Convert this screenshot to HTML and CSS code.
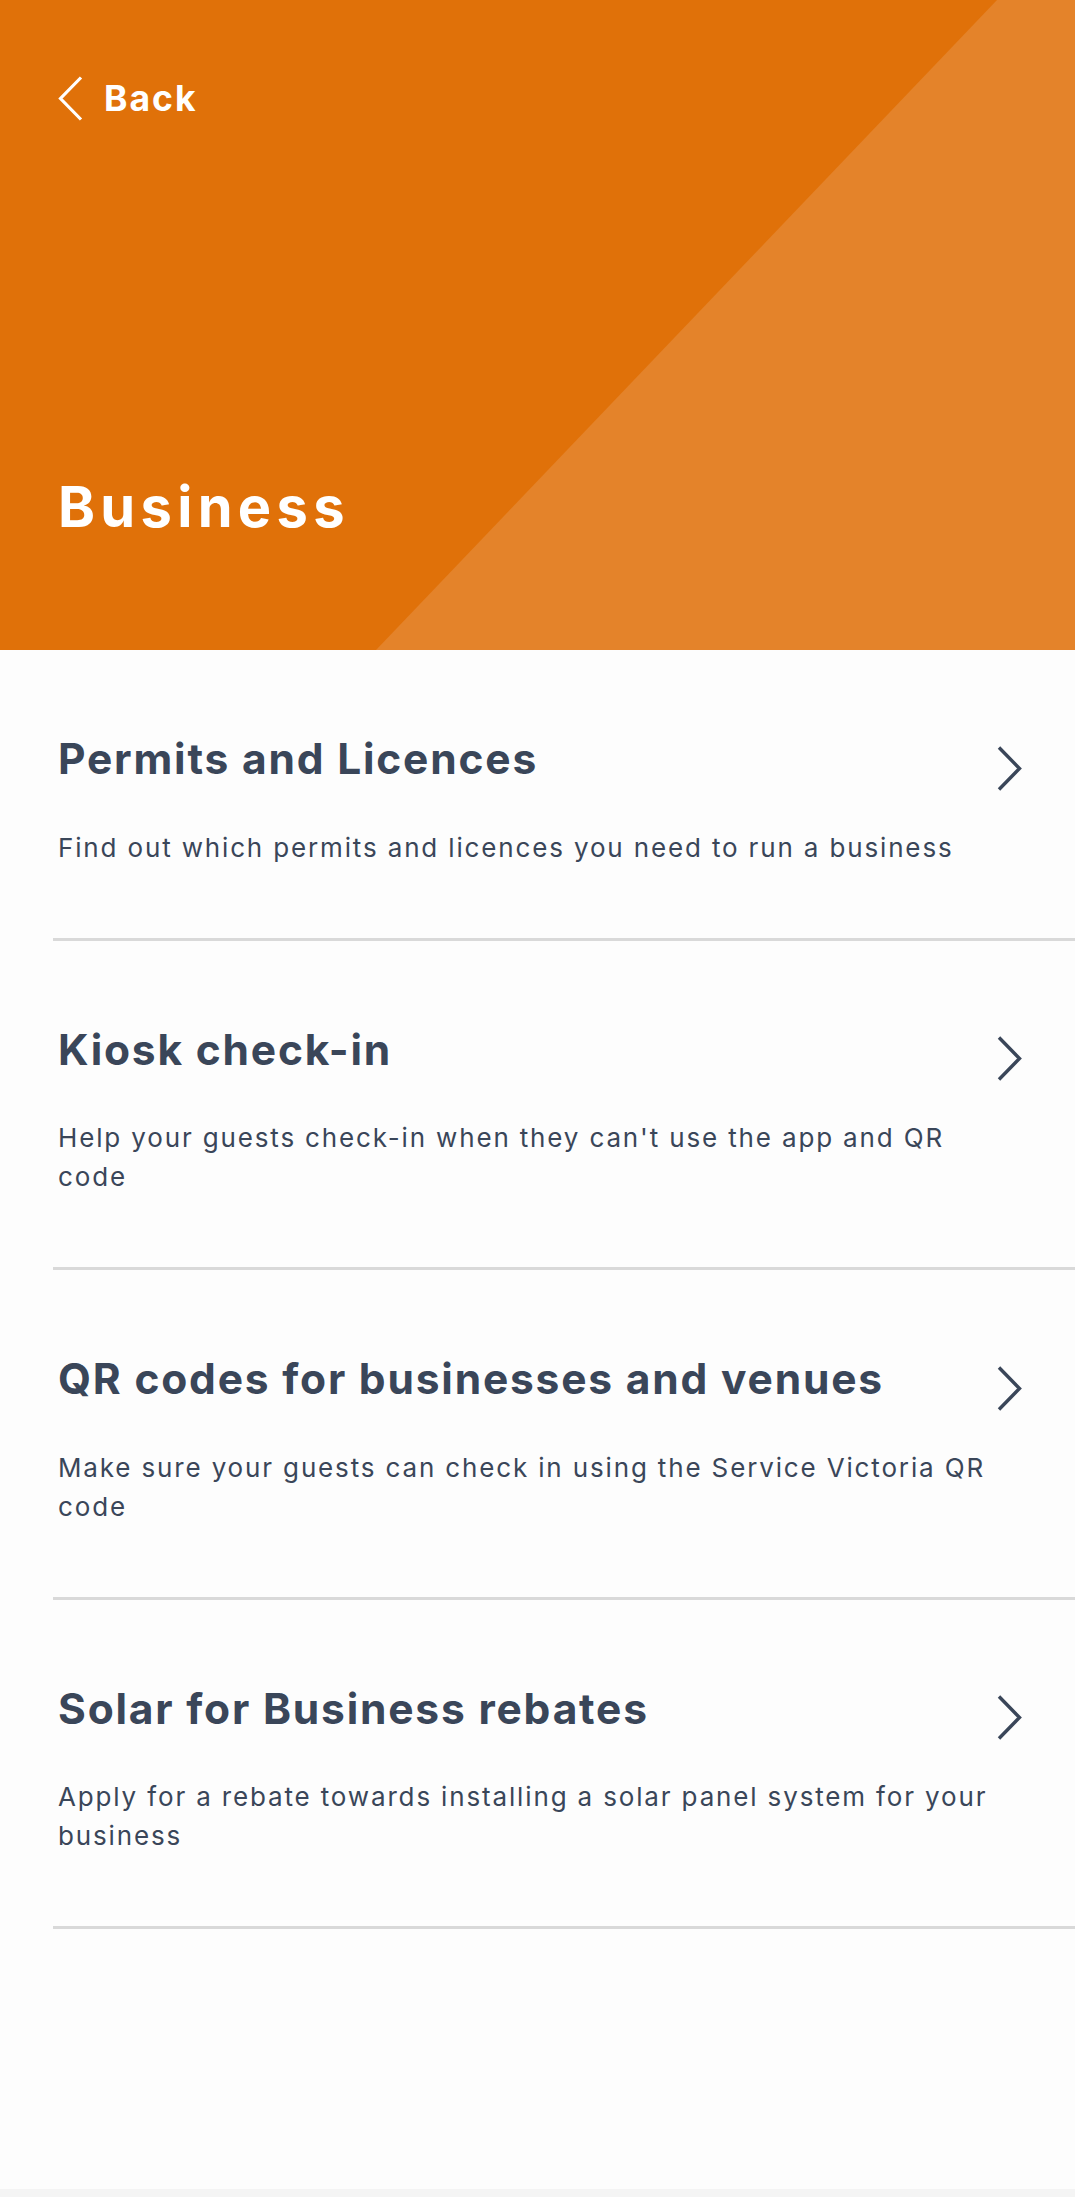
FILE: index.html
```html
<!DOCTYPE html>
<html lang="en">
<head>
<meta charset="utf-8">
<title>Business</title>
<link rel="stylesheet" href="styles.css">
</head>
<body>
<div class="page">
  <header class="hero">
    <a class="back" href="#">
      <svg class="back-icon" width="25" height="45" viewBox="0 0 25 45" aria-hidden="true"><polyline points="23,1.5 2.5,22.5 23,43.5" fill="none" stroke="#ffffff" stroke-width="3.2"/></svg>
      <span class="back-label">Back</span>
    </a>
    <h1 class="hero-title">Business</h1>
  </header>

  <ul class="list">
    <li class="item">
      <div class="item-head">
        <h2 class="item-title">Permits and Licences</h2>
        <svg class="chev" width="25" height="45" viewBox="0 0 25 45" aria-hidden="true"><polyline points="2,1.5 22.5,22.5 2,43.5" fill="none" stroke="#3a4659" stroke-width="3.4"/></svg>
      </div>
      <p class="item-desc">Find out which permits and licences you need to run a business</p>
    </li>
    <li class="item">
      <div class="item-head">
        <h2 class="item-title">Kiosk check-in</h2>
        <svg class="chev" width="25" height="45" viewBox="0 0 25 45" aria-hidden="true"><polyline points="2,1.5 22.5,22.5 2,43.5" fill="none" stroke="#3a4659" stroke-width="3.4"/></svg>
      </div>
      <p class="item-desc">Help your guests check-in when they can't use the app and QR code</p>
    </li>
    <li class="item">
      <div class="item-head">
        <h2 class="item-title">QR codes for businesses and venues</h2>
        <svg class="chev" width="25" height="45" viewBox="0 0 25 45" aria-hidden="true"><polyline points="2,1.5 22.5,22.5 2,43.5" fill="none" stroke="#3a4659" stroke-width="3.4"/></svg>
      </div>
      <p class="item-desc">Make sure your guests can check in using the Service Victoria QR code</p>
    </li>
    <li class="item">
      <div class="item-head">
        <h2 class="item-title">Solar for Business rebates</h2>
        <svg class="chev" width="25" height="45" viewBox="0 0 25 45" aria-hidden="true"><polyline points="2,1.5 22.5,22.5 2,43.5" fill="none" stroke="#3a4659" stroke-width="3.4"/></svg>
      </div>
      <p class="item-desc">Apply for a rebate towards installing a solar panel system for your business</p>
    </li>
  </ul>

  <div class="spacer"></div>
  <div class="bottom-bar"></div>
</div>
</body>
</html>
```
FILE: styles.css
```css
* { box-sizing: border-box; }

html, body {
  margin: 0;
  padding: 0;
}

body {
  background: #fdfdfd;
  font-family: Inter, "Noto Sans", "Liberation Sans", sans-serif;
  color: #3a4659;
}

.page {
  min-height: 2197px;
  display: flex;
  flex-direction: column;
}

.hero {
  position: relative;
  height: 650px;
  background: #e07109;
  padding: 76px 58px 0 58px;
  display: flex;
  flex-direction: column;
  overflow: hidden;
}

.hero::before {
  content: "";
  position: absolute;
  inset: 0;
  background: #e4832a;
  clip-path: polygon(997px 0, 100% 0, 100% 100%, 376px 100%);
}

.back {
  position: relative;
  display: flex;
  align-items: center;
  gap: 21px;
  height: 45px;
  color: #ffffff;
  text-decoration: none;
  align-self: flex-start;
}

.back-icon {
  display: block;
  flex: none;
  margin-top: -1px;
}

.back-label {
  font-size: 35.5px;
  font-weight: 700;
  line-height: 45px;
  letter-spacing: 2px;
}

.hero-title {
  position: relative;
  margin: 355px 0 0 0;
  font-size: 56px;
  font-weight: 700;
  line-height: 62px;
  color: #ffffff;
  letter-spacing: 5.3px;
}

.list {
  list-style: none;
  margin: 0;
  padding: 0;
}

.item {
  margin-left: 53px;
  padding: 77.5px 53px 71px 5px;
  border-bottom: 3px solid #d9d9d9;
}

.item-head {
  display: flex;
  align-items: center;
  justify-content: space-between;
  gap: 20px;
}

.item-title {
  margin: 0;
  font-size: 42.5px;
  font-weight: 700;
  line-height: 52px;
  letter-spacing: 1.8px;
}

.chev {
  display: block;
  flex: none;
  margin-top: 18px;
}

.item-desc {
  margin: 37px 0 0 0;
  font-size: 26px;
  font-weight: 400;
  line-height: 39px;
  max-width: 952px;
  letter-spacing: 1.85px;
}

.spacer {
  flex: 1;
}

.bottom-bar {
  height: 8px;
  background: #f4f4f4;
}
```
